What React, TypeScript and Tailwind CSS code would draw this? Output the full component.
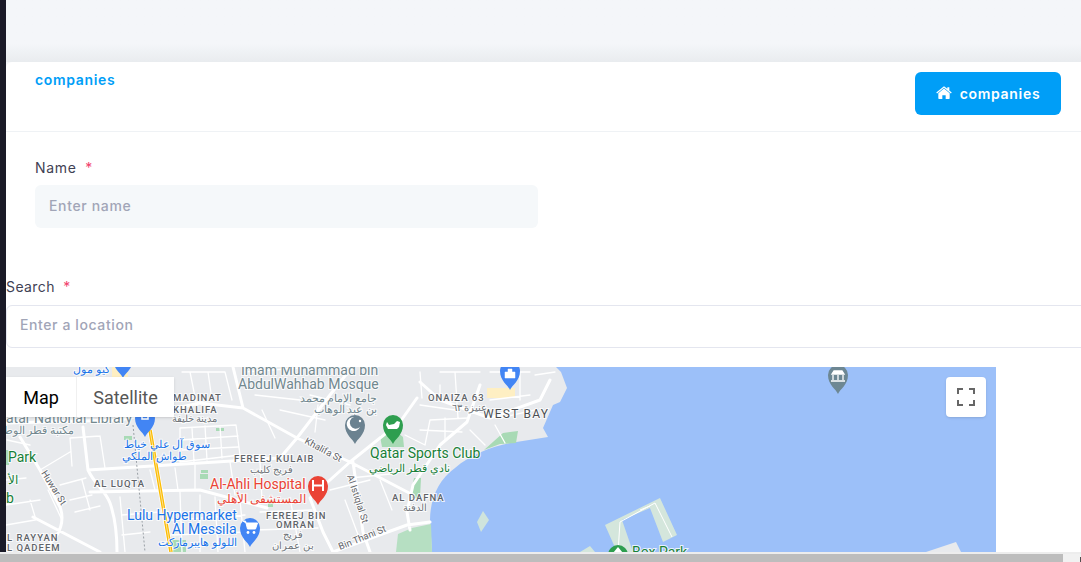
const MAIN_ROADS = [
  'M6 423 L120 420 L200 403 L243 408 L297 438 L350 462 L413 495',
  'M233 367 L243 408',
  'M417 398 L400 422 L350 462 L310 498 L323 532 L333 552',
  'M353 462 L363 532 L370 552',
  'M480 385 L467 422 L440 445 L413 485 L407 512 L410 530',
  'M20 437 L40 470 L60 507 C65 520 60 535 50 543',
  'M83 427 L88 470 C95 485 105 490 110 503 C116 520 117 535 117 552',
  'M88 470 L280 458 L297 438',
  'M33 517 L100 552',
  'M90 492 L200 490 L267 508',
  'M333 552 L407 525 L430 522',
  'M297 438 L330 395 L352 367',
  'M420 382 L440 400 L490 418 L540 400 L550 380',
]

const MINOR_ROADS = [
  'M180 428 L236 425 L240 455 L180 462 Z',
  'M192 428 L194 462 M205 426 L207 460 M220 426 L222 458 M180 440 L238 436 M182 450 L238 447',
  'M100 436 L70 438 L72 466 M100 436 L105 468 M40 470 L70 452',
  'M60 485 L86 478 M48 490 L62 520 M70 500 L92 495 M75 512 L100 506 M82 480 L90 510',
  'M120 497 L125 552 M122 515 L160 512 M122 535 L150 532',
  'M180 492 L182 552 M200 495 L200 552 M172 520 L245 515 M215 497 L218 552 M172 535 L245 532',
  'M290 498 L300 552 M260 512 L312 510 M255 530 L318 528 M240 500 L245 552',
  'M350 478 L390 474 M330 490 L370 480 M345 500 L360 540 M380 480 L392 510',
  'M182 372 L225 372 L232 400 M190 372 L196 402 M208 372 L212 400',
  'M245 372 L300 368 M255 395 L300 400 M310 395 L350 405',
  'M262 410 L275 438 M280 410 L325 420 M318 405 L315 432',
  'M420 372 L422 398 M440 372 L480 372 M440 385 L440 400 M455 372 L458 418 M420 405 L455 410',
  'M430 420 L468 418 M420 430 L462 432 M430 420 L425 445 M445 418 L445 440 M405 435 L425 445',
  'M490 372 L530 372 M520 372 L520 400 M490 400 L530 395 M500 418 L535 410 M535 375 L555 372',
  'M495 425 L505 443 M470 430 L485 445',
  'M7 440 L30 445 M6 480 L26 478 M6 505 L40 500 M6 525 L35 520 M30 500 L36 520',
  'M140 400 L140 420 M100 380 L130 378',
  'M150 470 L155 490 M175 468 L178 490 M195 465 L195 490 M230 462 L235 495 M260 462 L262 500',
]

function MapPin({ x, y, color, children }: { x: number; y: number; color: string; children?: React.ReactNode }) {
  return (
    <g transform={`translate(${x} ${y})`}>
      <path d="M0 0c-2-5-10-9-10-19a10 10 0 0 1 20 0c0 10-8 14-10 19z" fill={color} />
      {children}
    </g>
  )
}

function MapDrawing() {
  return (
    <svg width="990" height="185" viewBox="6 367 990 185" className="block" style={{ fontFamily: 'Roboto, sans-serif' }}>
      <rect x="6" y="367" width="990" height="185" fill="#e8eaed" />

      {/* water */}
      <path d="M556 367 L561 372 L567 388 L560 402 L553 405 L543 428 L548 437 L510 443 C490 447 470 455 455 468 C438 480 430 500 430 520 L432 552 L996 552 L996 367 Z" fill="#9cc0f9" />

      {/* parks */}
      <path d="M380 436 L392 428 L403 437 L404 447 L382 447 Z" fill="#a8dab5" />
      <path d="M414 478 L421 478 L420 498 L410 498 Z" fill="#a8dab5" />
      <path d="M396 552 L398 534 L412 528 L431 524 L432 552 Z" fill="#b6dfc2" />
      <path d="M503 433 L518 431 L516 443 L500 444 L484 450 Z" fill="#a8dab5" />
      <path d="M6 450 L9 450 L9 465 L6 465 Z" fill="#a8dab5" />
      <rect x="124" y="436" width="8" height="4" fill="#a8dab5" />
      <rect x="216" y="428" width="8" height="3" fill="#a8dab5" />
      <rect x="200" y="474" width="8" height="5" fill="#a8dab5" />
      <rect x="201" y="470" width="7" height="3" fill="#a8dab5" />
      <rect x="268" y="500" width="5" height="7" fill="#a8dab5" />
      <rect x="172" y="540" width="14" height="12" fill="#a8dab5" />
      <rect x="487" y="388" width="28" height="10" fill="#feefc3" />
      <rect x="112" y="367" width="16" height="10" fill="#feefc3" />

      {/* islands */}
      <path d="M483 511 L489 520 L481 532 L477 522 Z" fill="#cfe4dc" />
      <path d="M605 525 L660 498 L677 535 L663 542 L650 508 L622 520 L633 552 L617 552 Z" fill="#d4e6dc" />
      <path d="M580 552 L590 546 L595 552 Z" fill="#d4e6dc" />
      <path d="M618 552 L620 522 L655 503 L672 537 M650 506 L640 510" fill="none" stroke="#fff" strokeWidth="1" />
      <path d="M926 552 L956 542 L961 552 Z" fill="#e8eaed" />

      {/* roads */}
      <g fill="none" stroke="#fff" strokeLinecap="round" strokeLinejoin="round">
        <path d={MINOR_ROADS.join(' ')} strokeWidth="1.3" />
        <path d={MAIN_ROADS.join(' ')} strokeWidth="3" />
      </g>
      <path d="M150 430 L171 552" fill="none" stroke="#fff" strokeWidth="5" />
      <path d="M150 430 L171 552" fill="none" stroke="#fbbc04" strokeWidth="3.5" />
      <path d="M150 430 L171 552" fill="none" stroke="#fde293" strokeWidth="1" />
      <path d="M133 425 L145 552" fill="none" stroke="#9aa0a6" strokeWidth="1" strokeDasharray="2 2" />

      {/* every label keeps the map's white halo */}
      <g stroke="#fff" strokeWidth="2" strokeOpacity="0.8" paintOrder="stroke">
        {/* area labels */}
        <g fill="#5f6368" fontSize="9.5" letterSpacing="1" fontWeight="500">
          <text x="173" y="401">MADINAT</text>
          <text x="173" y="413">KHALIFA</text>
          <text x="234" y="462">FEREEJ KULAIB</text>
          <text x="94" y="487">AL LUQTA</text>
          <text x="266" y="519">FEREEJ BIN</text>
          <text x="276" y="528">OMRAN</text>
          <text x="392" y="501">AL DAFNA</text>
          <text x="428" y="401">ONAIZA 63</text>
          <text x="7" y="541">L RAYYAN</text>
          <text x="7" y="551">L QADEEM</text>
        </g>
        <text x="483" y="418" fill="#4a4e52" fontSize="12" letterSpacing="1.2">WEST BAY</text>

        {/* arabic area labels */}
        <g fill="#70757a" fontSize="10">
          <text x="172" y="422">مدينة خليفة</text>
          <text x="250" y="473">فريج كليب</text>
          <text x="452" y="411">عنيزة ٦٣</text>
          <text x="403" y="511">الدفنة</text>
          <text x="293" y="538" textAnchor="middle" fontSize="9.5">فريج</text>
          <text x="293" y="549" textAnchor="middle" fontSize="9.5">بن عمران</text>
        </g>

        {/* street labels */}
        <g fill="#5f6368" fontSize="9.5">
          <text transform="translate(304 443) rotate(28)">Khalifa St</text>
          <text transform="translate(347 476) rotate(72)">Al Istiqlal St</text>
          <text transform="translate(340 550) rotate(-22)">Bin Thani St</text>
          <text transform="translate(41 473) rotate(58)">Huwar St</text>
        </g>

        {/* places */}
        <g fontSize="14">
          <text x="241" y="375" fill="#72888f">Imam Muhammad bin</text>
          <text x="238" y="389" fill="#72888f">AbdulWahhab Mosque</text>
          <text x="6" y="423" fill="#72888f">atar National Library</text>
          <text x="8" y="462" fill="#188038">Park</text>
          <text x="6" y="503" fill="#188038">b</text>
          <text x="370" y="458" fill="#188038">Qatar Sports Club</text>
          <text x="210" y="489" fill="#ea4335">Al-Ahli Hospital</text>
          <text x="127" y="520" fill="#1a73e8">Lulu Hypermarket</text>
          <text x="172" y="534" fill="#1a73e8">Al Messila</text>
          <text x="632" y="557" fill="#188038">Box Park</text>
        </g>

        {/* arabic place labels */}
        <g fontSize="11">
          <text x="377" y="402" textAnchor="end" fill="#72888f">جامع الإمام محمد</text>
          <text x="377" y="413" textAnchor="end" fill="#72888f">بن عبد الوهاب</text>
          <text x="74" y="434" textAnchor="end" fill="#72888f">مكتبة قطر الوطنية</text>
          <text x="18" y="484" textAnchor="end" fill="#188038" fontSize="12">الأ</text>
          <text x="450" y="472" textAnchor="end" fill="#188038">نادي قطر الرياضي</text>
          <text x="306" y="503" textAnchor="end" fill="#ea4335" fontSize="12">المستشفى الأهلي</text>
          <text x="237" y="546" textAnchor="end" fill="#1a73e8">اللولو هايبرماركت</text>
          <text x="210" y="448" textAnchor="end" fill="#1a73e8">سوق آل علي خياط</text>
          <text x="187" y="460" textAnchor="end" fill="#1a73e8">طواش الملكي</text>
          <text x="110" y="373" textAnchor="end" fill="#1a73e8">كيو مول</text>
        </g>
      </g>

      {/* pins */}
      <MapPin x={123} y={378} color="#4285f4" />
      <MapPin x={145} y={437} color="#4285f4">
        <path d="M-3-24v6h6v-6M-3-21h6" fill="none" stroke="#fff" strokeWidth="1.5" />
      </MapPin>
      <MapPin x={355} y={444} color="#6b8290">
        <path d="M-1-27a7 7 0 1 0 6 10a6 6 0 1 1-6-10z" fill="#fff" />
        <circle cx="5" cy="-23" r="1.2" fill="#fff" />
      </MapPin>
      <MapPin x={393} y={444} color="#2e9e4f">
        <path d="M-6-22l2 3 5-1 3-3 3 1-1 5-2 2h-9l-2-4z" fill="#fff" />
      </MapPin>
      <MapPin x={318} y={505} color="#ea4335">
        <path d="M-5-25v11M5-25v11M-5-19.5H5" stroke="#fff" strokeWidth="2" fill="none" />
      </MapPin>
      <MapPin x={250} y={547} color="#4285f4">
        <path d="M-7-26h2.5l2 8h8l2-6H-4z" fill="#fff" stroke="#fff" strokeWidth="1" />
        <circle cx="-2" cy="-14.5" r="1.4" fill="#fff" />
        <circle cx="4" cy="-14.5" r="1.4" fill="#fff" />
      </MapPin>
      <MapPin x={510} y={390} color="#4285f4">
        <path d="M-5-18h10v6h-10zM-2-18v-3h4v3" fill="#fff" stroke="#fff" strokeWidth="0.5" />
      </MapPin>
      <MapPin x={838} y={394} color="#6d8793">
        <path d="M-7-13h14M-6-20h12l-2-3h-8zM-5-19v5M0-19v5M5-19v5" stroke="#fff" strokeWidth="1.3" fill="#fff" />
      </MapPin>
      <circle cx="618" cy="555" r="10" fill="#2e9e4f" />
      <path d="M618 547l-5 6h10z" fill="#fff" />
    </svg>
  )
}

export default function App() {
  return (
    <div className="relative flex h-[562px] overflow-hidden bg-[#f4f6f9] text-[#3f4254]" style={{ fontFamily: 'Inter, sans-serif' }}>
      <div className="w-[6px] shrink-0 bg-[#1a1a27]" />

      <div className="min-w-0 flex-1">
        <div className="h-[62px] bg-gradient-to-b from-[#f4f6f9] from-70% to-[#e9ecef]" />

        <div className="rounded-tl-md bg-white">
          {/* Header */}
          <div className="flex h-[70px] justify-between border-b border-[#eff2f5] pl-[29px] pr-5">
            <a className="pt-[10px] text-[14px] font-semibold leading-4 tracking-[0.65px] text-[#009ef7]">companies</a>
            <button className="mt-[10px] flex h-[43px] w-[146px] items-center justify-center gap-2 rounded-md bg-[#009ef7] pb-px text-[14px] font-semibold tracking-[0.7px] text-white">
              <svg width="16" height="14" viewBox="0 0 24 20" fill="currentColor">
                <path d="M12 3.2 3.5 10.4V18a1 1 0 0 0 1 1h5v-5.5h5V19h5a1 1 0 0 0 1-1v-7.6zM23.6 9.3 20 6.3V1.2h-3v2.6L12 0 .4 9.3l1.2 1.5L12 2.2l10.4 8.6z" />
              </svg>
              companies
            </button>
          </div>

          {/* Name */}
          <div className="pl-[29px] pt-[27px]">
            <label className="block text-[14px] font-normal leading-[18px] tracking-[0.7px]">
              Name <span className="ml-1 text-[#f1416c]">*</span>
            </label>
            <input
              placeholder="Enter name"
              className="mt-2 block h-[43px] w-[503px] rounded-md bg-[#f5f8fa] px-[14px] pb-0.5 text-[14px] font-medium tracking-[0.65px] outline-none placeholder:text-[#a1a5b7]"
            />
          </div>

          {/* Search */}
          <div className="pt-[50px]">
            <label className="block text-[14px] font-normal leading-[18px] tracking-[0.4px]">
              Search <span className="ml-1 text-[#f1416c]">*</span>
            </label>
            <input
              placeholder="Enter a location"
              className="mt-[9px] block h-[43px] w-[1200px] rounded-md border border-[#e4e6ef] bg-white px-[13px] pb-1 text-[14px] font-medium tracking-[0.6px] outline-none placeholder:text-[#a1a5b7]"
            />
          </div>

          {/* Map */}
          <div className="relative mt-[19px] w-[990px]">
            <MapDrawing />
            <div className="absolute left-0 top-[10px] flex h-10 bg-white text-[18px] shadow-sm" style={{ fontFamily: 'Roboto, sans-serif' }}>
              <span className="flex w-[70px] items-center justify-center text-black">Map</span>
              <span className="flex w-[98px] items-center justify-center border-l border-[#f0f0f0] text-[#565656]">Satellite</span>
            </div>
            <button className="absolute right-[10px] top-[10px] flex h-10 w-10 items-center justify-center rounded-sm bg-white shadow-sm">
              <svg width="18" height="18" viewBox="0 0 18 18" fill="#666">
                <path d="M0 0h6v2H2v4H0zM12 0h6v6h-2V2h-4zM0 12h2v4h4v2H0zM16 12h2v6h-6v-2h4z" />
              </svg>
            </button>
          </div>
        </div>
      </div>

      {/* Page scrollbar */}
      <div className="absolute inset-x-0 bottom-0 h-[10px] border-t-2 border-[#ededed] bg-[#f1f1f1]">
        <div className="h-2 w-[1063px] bg-[#bdbdbd]" />
        <div className="absolute bottom-0 right-0 h-[5px] w-px bg-[#505050]" />
      </div>
    </div>
  )
}
